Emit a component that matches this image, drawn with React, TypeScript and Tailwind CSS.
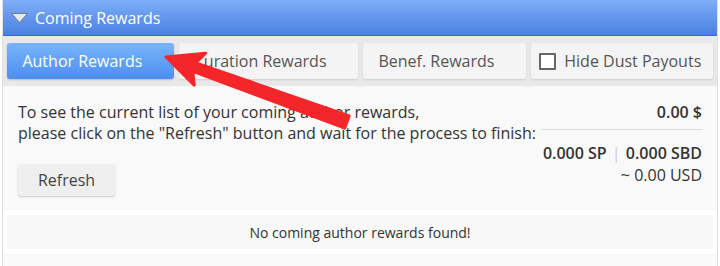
export default function App() {
  return (
    <div className="relative w-[720px] h-[266px] overflow-hidden bg-white font-['Open_Sans',sans-serif]">
      <div className="mx-[2px] flex flex-col h-full border-x border-[#e0e0e0]">
        {/* header */}
        <div className="h-[36px] flex items-center gap-[6px] pl-[7px] bg-gradient-to-b from-[#7eaefa] to-[#4a80df] border-b border-[#3a6bc8] text-white text-[16px]">
          <svg width="19" height="12" viewBox="0 0 19 12">
            <path d="M1.5 1.5 L17.5 1.5 L9.5 10.5 Z" fill="#e6e9ef" stroke="#6f7a90" strokeWidth="1" strokeLinejoin="round" />
          </svg>
          <span>Coming Rewards</span>
        </div>

        {/* tabs */}
        <div className="flex gap-[5px] px-[4px] py-[7px] bg-[#e9e9e9] text-[16px] text-[#555]">
          <button className="w-[167px] h-[36px] pr-[16px] rounded-[3px] bg-gradient-to-b from-[#78b5fc] to-[#4d8eef] text-white shadow-[0_1px_2px_rgba(0,0,0,0.2)]">
            Author Rewards
          </button>
          <button className="w-[179px] h-[36px] pr-[16px] rounded-[3px] bg-[#f4f4f4] shadow-[0_1px_2px_rgba(0,0,0,0.12)]">
            Curation Rewards
          </button>
          <button className="w-[164px] h-[36px] pr-[16px] rounded-[3px] bg-[#f4f4f4] shadow-[0_1px_2px_rgba(0,0,0,0.12)]">
            Benef. Rewards
          </button>
          <label className="w-[182px] h-[36px] rounded-[3px] bg-[#f4f4f4] shadow-[0_1px_2px_rgba(0,0,0,0.12)] flex items-center gap-[8px] pl-[8px]">
            <span className="w-[17px] h-[17px] border-2 border-[#666] rounded-[1px] bg-white" />
            <span>Hide Dust Payouts</span>
          </label>
        </div>

        {/* content */}
        <div className="flex-1 bg-[#f9f9f9] pt-[16px]">
          <div className="flex justify-between px-[15px] text-[16px] leading-[21px] text-[#333]">
            <div>
              <p>To see the current list of your coming author rewards,</p>
              <p>please click on the "Refresh" button and wait for the process to finish:</p>
              <button className="mt-[20px] w-[97px] h-[32px] rounded-[3px] bg-[#efefef] text-[#444] shadow-[0_1px_2px_rgba(0,0,0,0.2)]">
                Refresh
              </button>
            </div>
            <div className="w-[161px] text-right">
              <p className="font-semibold pb-[6px] border-b border-[#ddd]">0.00 $</p>
              <p className="font-semibold pt-[12px] leading-[22px]">
                0.000 SP <span className="font-normal text-[#ccc] px-[1px]">|</span> 0.000 SBD
              </p>
              <p className="leading-[22px]">~ 0.00 USD</p>
            </div>
          </div>

          <div className="mt-[14px] bg-white py-[5px] px-[4px]">
            <div className="h-[34px] bg-[#f8f8f8] flex items-center justify-center text-[14px] text-[#333]">
              No coming author rewards found!
            </div>
          </div>
        </div>
      </div>

      {/* annotation arrow */}
      <svg className="absolute inset-0 pointer-events-none" width="720" height="266" viewBox="0 0 720 266">
        <polygon
          points="166,57 205.6,53.2 195.8,62.9 349.2,115.9 344.8,128.1 192.8,71.3 194.2,85.2"
          fill="#f5262a"
          stroke="#f5262a"
          strokeWidth="3"
          strokeLinejoin="round"
        />
      </svg>
    </div>
  );
}
